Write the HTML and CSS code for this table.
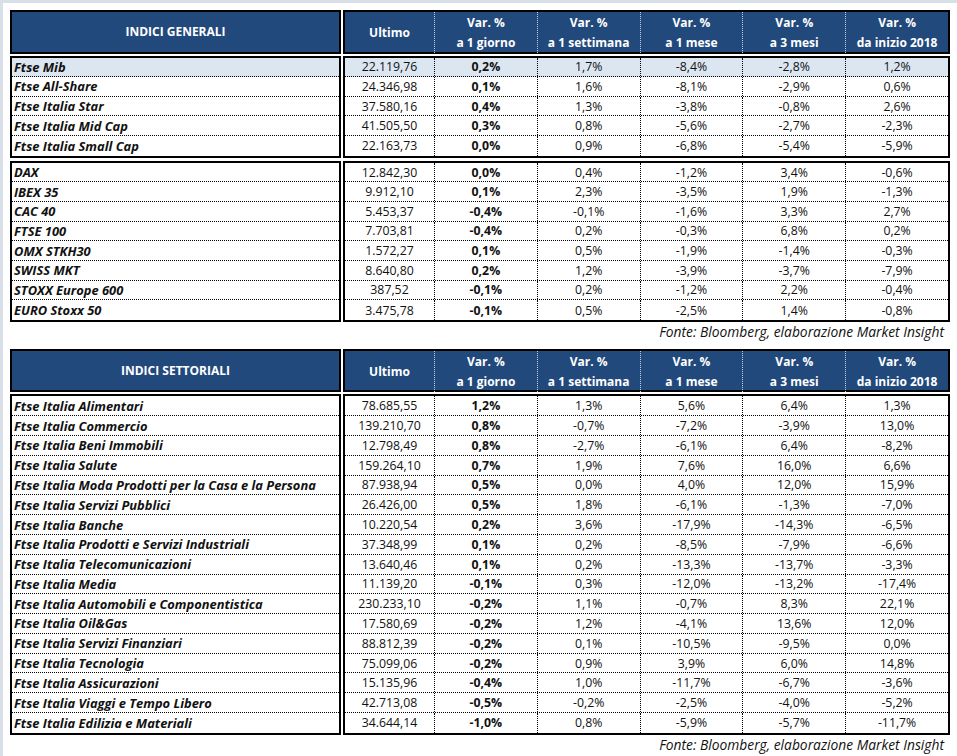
FILE: index.html
```html
<!DOCTYPE html>
<html lang="it">
<head>
<meta charset="utf-8">
<title>Indici</title>
<link rel="stylesheet" href="styles.css">
</head>
<body>
<div class="page">
  <section class="tbl t1">
    <div class="box head hname">INDICI GENERALI</div>
    <div class="box head hvals">
      <div class="hc">Ultimo</div>
      <div class="hc"><span>Var. %</span><span>a 1 giorno</span></div>
      <div class="hc"><span>Var. %</span><span>a 1 settimana</span></div>
      <div class="hc"><span>Var. %</span><span>a 1 mese</span></div>
      <div class="hc"><span>Var. %</span><span>a 3 mesi</span></div>
      <div class="hc"><span>Var. %</span><span>da inizio 2018</span></div>
    </div>

    <div class="box names g1">
      <div class="r hl">Ftse Mib</div>
      <div class="r">Ftse All-Share</div>
      <div class="r">Ftse Italia Star</div>
      <div class="r">Ftse Italia Mid Cap</div>
      <div class="r">Ftse Italia Small Cap</div>
    </div>
    <div class="box vals g1">
      <div class="vr hl"><span>22.119,76</span><span>0,2%</span><span>1,7%</span><span>-8,4%</span><span>-2,8%</span><span>1,2%</span></div>
      <div class="vr"><span>24.346,98</span><span>0,1%</span><span>1,6%</span><span>-8,1%</span><span>-2,9%</span><span>0,6%</span></div>
      <div class="vr"><span>37.580,16</span><span>0,4%</span><span>1,3%</span><span>-3,8%</span><span>-0,8%</span><span>2,6%</span></div>
      <div class="vr"><span>41.505,50</span><span>0,3%</span><span>0,8%</span><span>-5,6%</span><span>-2,7%</span><span>-2,3%</span></div>
      <div class="vr"><span>22.163,73</span><span>0,0%</span><span>0,9%</span><span>-6,8%</span><span>-5,4%</span><span>-5,9%</span></div>
    </div>

    <div class="box names g2">
      <div class="r">DAX</div>
      <div class="r">IBEX 35</div>
      <div class="r">CAC 40</div>
      <div class="r">FTSE 100</div>
      <div class="r">OMX STKH30</div>
      <div class="r">SWISS MKT</div>
      <div class="r">STOXX Europe 600</div>
      <div class="r">EURO Stoxx 50</div>
    </div>
    <div class="box vals g2">
      <div class="vr"><span>12.842,30</span><span>0,0%</span><span>0,4%</span><span>-1,2%</span><span>3,4%</span><span>-0,6%</span></div>
      <div class="vr"><span>9.912,10</span><span>0,1%</span><span>2,3%</span><span>-3,5%</span><span>1,9%</span><span>-1,3%</span></div>
      <div class="vr"><span>5.453,37</span><span>-0,4%</span><span>-0,1%</span><span>-1,6%</span><span>3,3%</span><span>2,7%</span></div>
      <div class="vr"><span>7.703,81</span><span>-0,4%</span><span>0,2%</span><span>-0,3%</span><span>6,8%</span><span>0,2%</span></div>
      <div class="vr"><span>1.572,27</span><span>0,1%</span><span>0,5%</span><span>-1,9%</span><span>-1,4%</span><span>-0,3%</span></div>
      <div class="vr"><span>8.640,80</span><span>0,2%</span><span>1,2%</span><span>-3,9%</span><span>-3,7%</span><span>-7,9%</span></div>
      <div class="vr"><span>387,52</span><span>-0,1%</span><span>0,2%</span><span>-1,2%</span><span>2,2%</span><span>-0,4%</span></div>
      <div class="vr"><span>3.475,78</span><span>-0,1%</span><span>0,5%</span><span>-2,5%</span><span>1,4%</span><span>-0,8%</span></div>
    </div>
  </section>
  <p class="src">Fonte: Bloomberg, elaborazione Market Insight</p>

  <section class="tbl t2">
    <div class="box head hname">INDICI SETTORIALI</div>
    <div class="box head hvals">
      <div class="hc">Ultimo</div>
      <div class="hc"><span>Var. %</span><span>a 1 giorno</span></div>
      <div class="hc"><span>Var. %</span><span>a 1 settimana</span></div>
      <div class="hc"><span>Var. %</span><span>a 1 mese</span></div>
      <div class="hc"><span>Var. %</span><span>a 3 mesi</span></div>
      <div class="hc"><span>Var. %</span><span>da inizio 2018</span></div>
    </div>

    <div class="box names g1">
      <div class="r">Ftse Italia Alimentari</div>
      <div class="r">Ftse Italia Commercio</div>
      <div class="r">Ftse Italia Beni Immobili</div>
      <div class="r">Ftse Italia Salute</div>
      <div class="r">Ftse Italia Moda Prodotti per la Casa e la Persona</div>
      <div class="r">Ftse Italia Servizi Pubblici</div>
      <div class="r">Ftse Italia Banche</div>
      <div class="r">Ftse Italia Prodotti e Servizi Industriali</div>
      <div class="r">Ftse Italia Telecomunicazioni</div>
      <div class="r">Ftse Italia Media</div>
      <div class="r">Ftse Italia Automobili e Componentistica</div>
      <div class="r">Ftse Italia Oil&amp;Gas</div>
      <div class="r">Ftse Italia Servizi Finanziari</div>
      <div class="r">Ftse Italia Tecnologia</div>
      <div class="r">Ftse Italia Assicurazioni</div>
      <div class="r">Ftse Italia Viaggi e Tempo Libero</div>
      <div class="r">Ftse Italia Edilizia e Materiali</div>
    </div>
    <div class="box vals g1">
      <div class="vr"><span>78.685,55</span><span>1,2%</span><span>1,3%</span><span>5,6%</span><span>6,4%</span><span>1,3%</span></div>
      <div class="vr"><span>139.210,70</span><span>0,8%</span><span>-0,7%</span><span>-7,2%</span><span>-3,9%</span><span>13,0%</span></div>
      <div class="vr"><span>12.798,49</span><span>0,8%</span><span>-2,7%</span><span>-6,1%</span><span>6,4%</span><span>-8,2%</span></div>
      <div class="vr"><span>159.264,10</span><span>0,7%</span><span>1,9%</span><span>7,6%</span><span>16,0%</span><span>6,6%</span></div>
      <div class="vr"><span>87.938,94</span><span>0,5%</span><span>0,0%</span><span>4,0%</span><span>12,0%</span><span>15,9%</span></div>
      <div class="vr"><span>26.426,00</span><span>0,5%</span><span>1,8%</span><span>-6,1%</span><span>-1,3%</span><span>-7,0%</span></div>
      <div class="vr"><span>10.220,54</span><span>0,2%</span><span>3,6%</span><span>-17,9%</span><span>-14,3%</span><span>-6,5%</span></div>
      <div class="vr"><span>37.348,99</span><span>0,1%</span><span>0,2%</span><span>-8,5%</span><span>-7,9%</span><span>-6,6%</span></div>
      <div class="vr"><span>13.640,46</span><span>0,1%</span><span>0,2%</span><span>-13,3%</span><span>-13,7%</span><span>-3,3%</span></div>
      <div class="vr"><span>11.139,20</span><span>-0,1%</span><span>0,3%</span><span>-12,0%</span><span>-13,2%</span><span>-17,4%</span></div>
      <div class="vr"><span>230.233,10</span><span>-0,2%</span><span>1,1%</span><span>-0,7%</span><span>8,3%</span><span>22,1%</span></div>
      <div class="vr"><span>17.580,69</span><span>-0,2%</span><span>1,2%</span><span>-4,1%</span><span>13,6%</span><span>12,0%</span></div>
      <div class="vr"><span>88.812,39</span><span>-0,2%</span><span>0,1%</span><span>-10,5%</span><span>-9,5%</span><span>0,0%</span></div>
      <div class="vr"><span>75.099,06</span><span>-0,2%</span><span>0,9%</span><span>3,9%</span><span>6,0%</span><span>14,8%</span></div>
      <div class="vr"><span>15.135,96</span><span>-0,4%</span><span>1,0%</span><span>-11,7%</span><span>-6,7%</span><span>-3,6%</span></div>
      <div class="vr"><span>42.713,08</span><span>-0,5%</span><span>-0,2%</span><span>-2,5%</span><span>-4,0%</span><span>-5,2%</span></div>
      <div class="vr"><span>34.644,14</span><span>-1,0%</span><span>0,8%</span><span>-5,9%</span><span>-5,7%</span><span>-11,7%</span></div>
    </div>
  </section>
  <p class="src">Fonte: Bloomberg, elaborazione Market Insight</p>
</div>
</body>
</html>
```
FILE: styles.css
```css
html, body {
  margin: 0;
  padding: 0;
  background: #ffffff;
}

body {
  font-family: "Open Sans", "Noto Sans", sans-serif;
  font-size: 12px;
  color: #111111;
}

.page {
  box-sizing: border-box;
  min-height: 100vh;
  border-top: 3px solid #d9dfe9;
  border-left: 3px solid #d9dfe9;
  padding: 7px 7px 0 7px;
}

.tbl {
  display: grid;
  grid-template-columns: 331px 607px;
  column-gap: 2px;
}

.t1 { --rh: 19.65px; }
.t2 { --rh: 19.8px; margin-top: 7px; }

.box {
  box-sizing: border-box;
  border: 2px solid #000000;
}

.head {
  height: 43.5px;
  background: #22497c;
  color: #ffffff;
  font-weight: bold;
}

.hname {
  display: flex;
  align-items: center;
  justify-content: center;
}

.hvals {
  display: grid;
  grid-template-columns: 89px repeat(5, 1fr);
}

.hc {
  display: flex;
  flex-direction: column;
  align-items: center;
  justify-content: center;
  line-height: 20px;
  padding-top: 1px;
  border-left: 1px dotted #c9d2df;
}

.hc:first-child {
  border-left: none;
}

.g1 { margin-top: 2px; }
.g2 { margin-top: 3px; }

.r {
  box-sizing: border-box;
  height: var(--rh);
  display: flex;
  align-items: center;
  padding-left: 2px;
  font-size: 12.9px;
  font-weight: bold;
  font-style: italic;
  white-space: nowrap;
  border-bottom: 1px dotted #000000;
}

.vr {
  box-sizing: border-box;
  height: var(--rh);
  display: grid;
  grid-template-columns: 89px repeat(5, 1fr);
  font-size: 12.3px;
  border-bottom: 1px dotted #000000;
}

.r:last-child,
.vr:last-child {
  border-bottom: none;
}

.vr span {
  display: flex;
  align-items: center;
  justify-content: center;
  border-left: 1px dotted #000000;
}

.vr span:first-child {
  border-left: none;
}

.vr span:nth-child(2) {
  font-weight: bold;
}

.hl {
  background: #dce6f1;
}

.src {
  margin: 0;
  height: 20px;
  line-height: 20px;
  text-align: right;
  font-size: 13.8px;
  font-style: italic;
  padding-right: 6px;
}
```
